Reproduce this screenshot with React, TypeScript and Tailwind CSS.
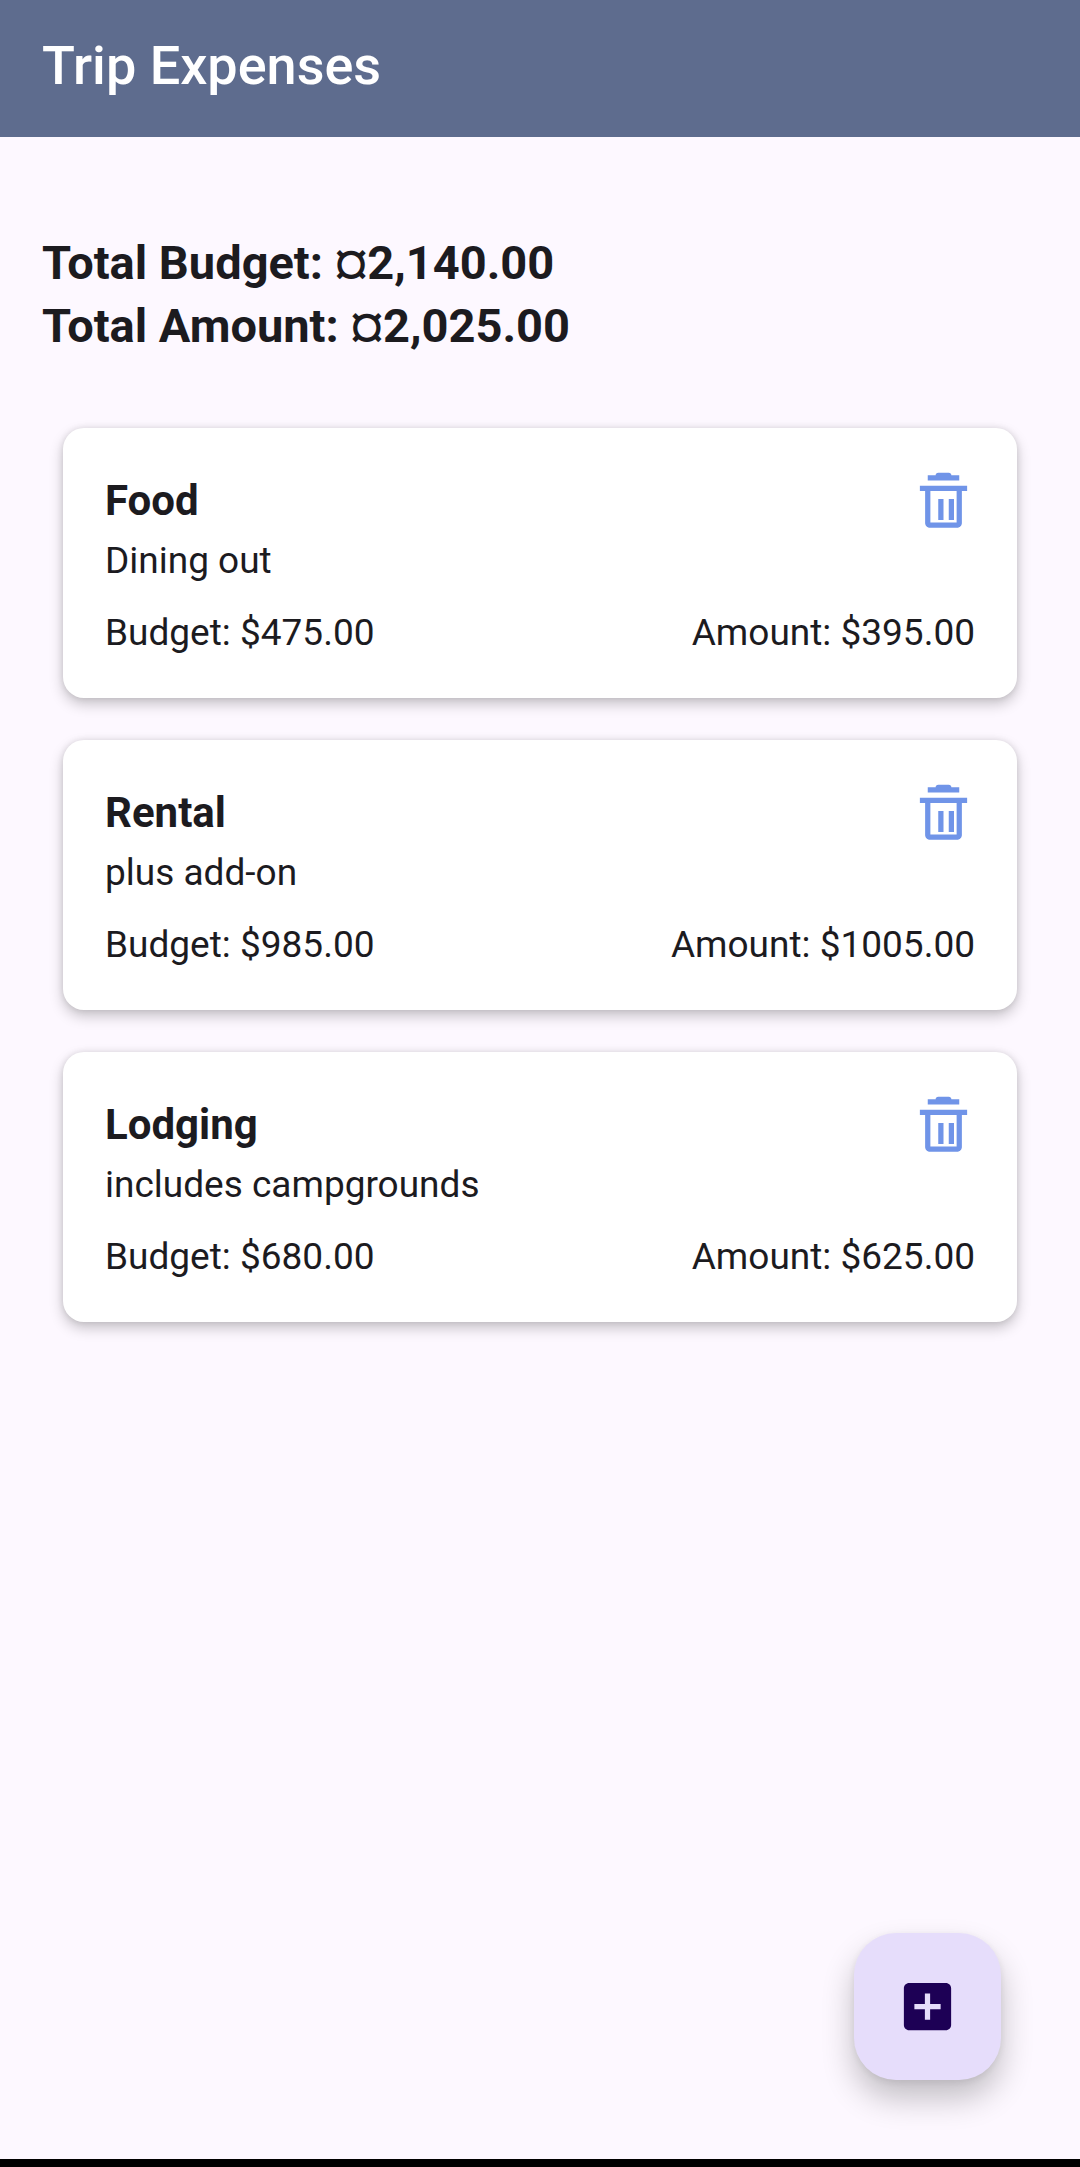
type Expense = {
  id: number
  category: string
  description: string
  budget: number
  amount: number
}

const expenses: Expense[] = [
  { id: 1, category: 'Food', description: 'Dining out', budget: 475, amount: 395 },
  { id: 2, category: 'Rental', description: 'plus add-on', budget: 985, amount: 1005 },
  { id: 3, category: 'Lodging', description: 'includes campgrounds', budget: 680, amount: 625 },
]

function formatTotal(value: number) {
  return '¤' + value.toLocaleString('en-US', { minimumFractionDigits: 2 })
}

function TrashIcon() {
  return (
    <svg viewBox="0 0 24 24" className="size-[63px]" fill="#7094e8" aria-hidden="true">
      <path d="M6 2h3c0-.6.4-1 1-1h4c.6 0 1 .4 1 1h3v2H6z" />
      <path
        fillRule="evenodd"
        d="M3 6h18v2h-2v12.2c0 1-.8 1.8-1.8 1.8H6.8c-1 0-1.8-.8-1.8-1.8V8H3zM7 8h10v12H7z"
      />
      <path d="M10 11h2v8h-2zM14 11h2v8h-2z" />
    </svg>
  )
}

function AddBoxIcon() {
  return (
    <svg viewBox="0 0 24 24" className="size-[63px]" fill="currentColor" aria-hidden="true">
      <path d="M19 3H5c-1.1 0-2 .9-2 2v14c0 1.1.9 2 2 2h14c1.1 0 2-.9 2-2V5c0-1.1-.9-2-2-2zm-2 10h-4v4h-2v-4H7v-2h4V7h2v4h4v2z" />
    </svg>
  )
}

function ExpenseCard({ expense }: { expense: Expense }) {
  return (
    <li className="rounded-[21px] bg-white px-[42px] pt-[42px] pb-[39px] text-[37px] leading-[52px] shadow-[0_6px_14px_rgba(0,0,0,0.22),0_0_6px_rgba(0,0,0,0.1)]">
      <div className="flex items-start justify-between">
        <h2 className="text-[42px] leading-[61px] font-bold">{expense.category}</h2>
        <button type="button" aria-label={`Delete ${expense.category}`}>
          <TrashIcon />
        </button>
      </div>
      <p className="mt-0.5">{expense.description}</p>
      <div className="mt-5 flex justify-between">
        <span>Budget: ${expense.budget.toFixed(2)}</span>
        <span>Amount: ${expense.amount.toFixed(2)}</span>
      </div>
    </li>
  )
}

export default function App() {
  const totalBudget = expenses.reduce((sum, e) => sum + e.budget, 0)
  const totalAmount = expenses.reduce((sum, e) => sum + e.amount, 0)

  return (
    <div className="flex min-h-screen flex-col bg-[#fdf8ff] font-['Roboto',sans-serif] text-[#1c1b1f]">
      <header className="bg-[#5e6c8e] px-[42px] pt-8 pb-[37px]">
        <h1 className="text-[54px] leading-[68px] font-medium text-white">Trip Expenses</h1>
      </header>

      <main className="flex-1">
        <section className="px-[42px] pt-[94px] text-[47px] leading-[63px] font-bold">
          <p>Total Budget: {formatTotal(totalBudget)}</p>
          <p>Total Amount: {formatTotal(totalAmount)}</p>
        </section>

        <ul className="flex flex-col gap-[42px] px-[63px] pt-[71px] pb-[63px]">
          {expenses.map((expense) => (
            <ExpenseCard key={expense.id} expense={expense} />
          ))}
        </ul>
      </main>

      <button
        type="button"
        aria-label="Add expense"
        className="fixed right-[79px] bottom-[87px] flex size-[147px] items-center justify-center rounded-[42px] bg-[#e6ddfb] text-[#1d0055] shadow-[0_18px_32px_rgba(0,0,0,0.24),0_2px_8px_rgba(0,0,0,0.08)]"
      >
        <AddBoxIcon />
      </button>

      <footer className="h-2 bg-black" />
    </div>
  )
}
